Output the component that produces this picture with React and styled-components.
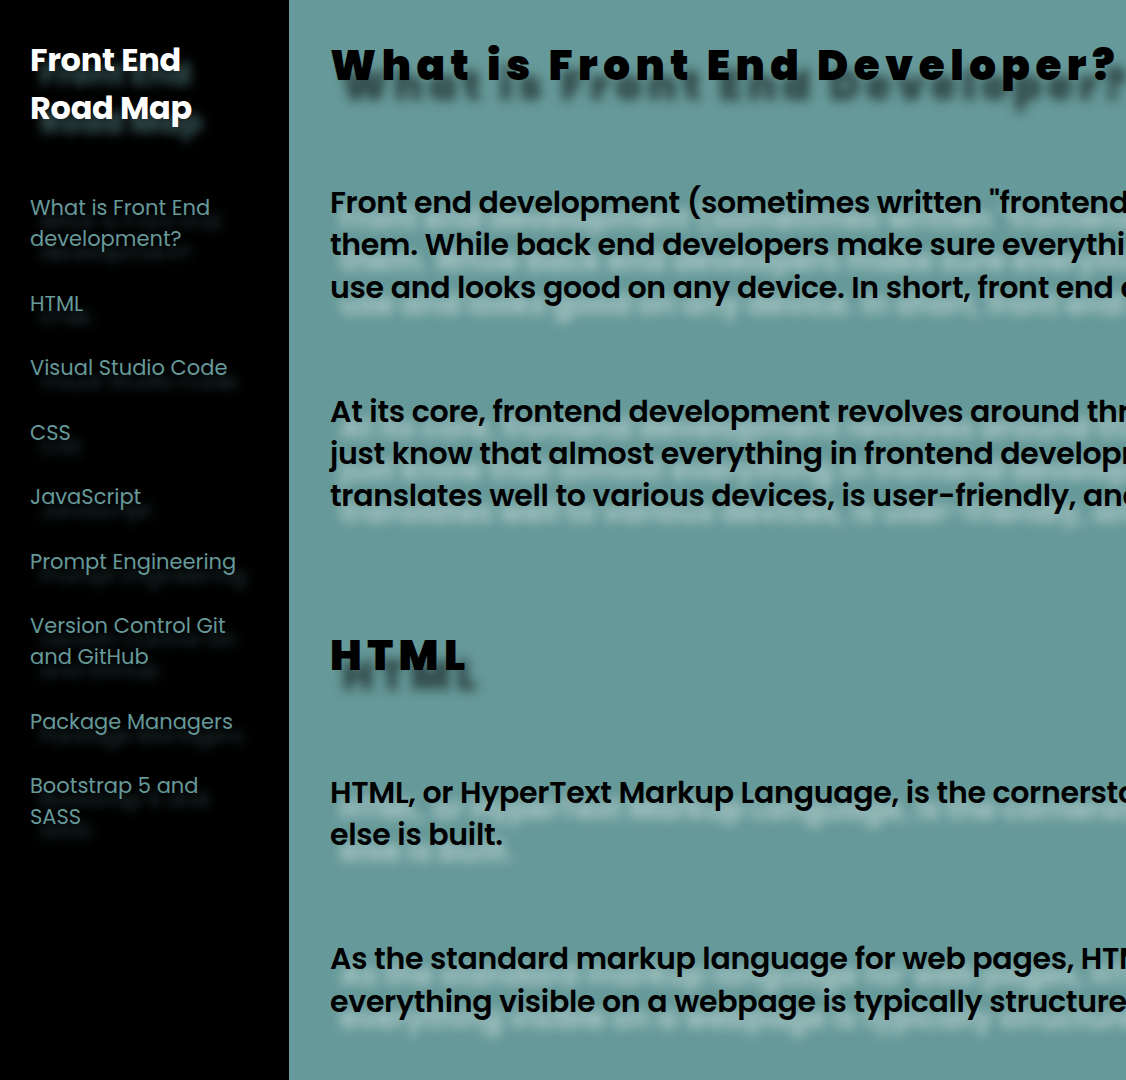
import React from "react";
import styled, { createGlobalStyle } from "styled-components";

const Global = createGlobalStyle`
  html, body { margin: 0; padding: 0; background: #000; }
  body { overflow: hidden; font-family: "Poppins", Inter, "Open Sans", sans-serif; }
`;

const Page = styled.div`
  display: flex;
  height: 100vh;
  width: 100vw;
  overflow: hidden;
`;

const Sidebar = styled.aside`
  flex: 0 0 289px;
  background: #000;
  padding: 36px 44px 0 30px;
  box-sizing: border-box;
`;

const Brand = styled.h1`
  margin: 0 0 60px;
  color: #fff;
  font-size: 32px;
  font-weight: 700;
  line-height: 48px;
  letter-spacing: -0.3px;
  text-shadow: 10px 14px 11px rgba(102, 153, 153, 0.6);
`;

const NavList = styled.ul`
  list-style: none;
  margin: 0;
  padding: 0;
  display: flex;
  flex-direction: column;
  gap: 33.5px;
`;

const NavLink = styled.a`
  display: block;
  color: #669999;
  text-decoration: none;
  font-size: 21px;
  line-height: 31px;
  font-weight: 400;
  text-shadow: 10px 14px 11px rgba(102, 153, 153, 0.45);
`;

const Main = styled.main`
  flex: 1;
  min-width: 0;
  background: #669999;
  padding: 41px 0 0 41px;
  overflow: hidden;
`;

const Section = styled.section`
  margin-bottom: 113px;
`;

const Heading = styled.h2`
  margin: 0 0 91px;
  color: #000;
  font-size: 42px;
  font-weight: 900;
  line-height: 50px;
  letter-spacing: 5.5px;
  white-space: nowrap;
  text-shadow: 12px 20px 11px rgba(0, 0, 0, 0.55);
`;

const Para = styled.p`
  margin: 0;
  color: #000;
  font-size: 30px;
  font-weight: 600;
  line-height: 42.3px;
  letter-spacing: -0.3px;
  white-space: nowrap;
  text-shadow: 10px 16px 12px rgba(255, 255, 255, 0.55);
  & + & { margin-top: 82px; }
`;

const navItems = [
  "What is Front End development?",
  "HTML",
  "Visual Studio Code",
  "CSS",
  "JavaScript",
  "Prompt Engineering",
  "Version Control Git and GitHub",
  "Package Managers",
  "Bootstrap 5 and SASS",
];

const sections = [
  {
    title: "What is Front End Developer?",
    paras: [
      [
        'Front end development (sometimes written "frontend" or "front-end") is the practice of building everything users see and how they interact with',
        "them. While back end developers make sure everything works behind the scenes, front end developers make sure a website is easy to",
        "use and looks good on any device. In short, front end developers build the user interface of the web.",
      ],
      [
        "At its core, frontend development revolves around three main technologies: HTML, CSS and JavaScript. Don't worry about them yet,",
        "just know that almost everything in frontend development is built with them. A front end developer makes sure a website",
        "translates well to various devices, is user-friendly, and performs well for everyone.",
      ],
    ],
  },
  {
    title: "HTML",
    paras: [
      [
        "HTML, or HyperText Markup Language, is the cornerstone of web development. It provides the structure upon which everything",
        "else is built.",
      ],
      [
        "As the standard markup language for web pages, HTML tells the browser how to display content. This means that",
        "everything visible on a webpage is typically structured with HTML elements.",
      ],
    ],
  },
];

export default function App() {
  return (
    <>
      <Global />
      <Page>
        <Sidebar>
          <Brand>
            Front End
            <br />
            Road Map
          </Brand>
          <nav>
            <NavList>
              {navItems.map((item) => (
                <li key={item}>
                  <NavLink href="#">{item}</NavLink>
                </li>
              ))}
            </NavList>
          </nav>
        </Sidebar>
        <Main>
          {sections.map((s) => (
            <Section key={s.title}>
              <Heading>{s.title}</Heading>
              {s.paras.map((lines, i) => (
                <Para key={i}>
                  {lines.map((l, j) => (
                    <React.Fragment key={j}>
                      {j > 0 && <br />}
                      {l}
                    </React.Fragment>
                  ))}
                </Para>
              ))}
            </Section>
          ))}
        </Main>
      </Page>
    </>
  );
}
